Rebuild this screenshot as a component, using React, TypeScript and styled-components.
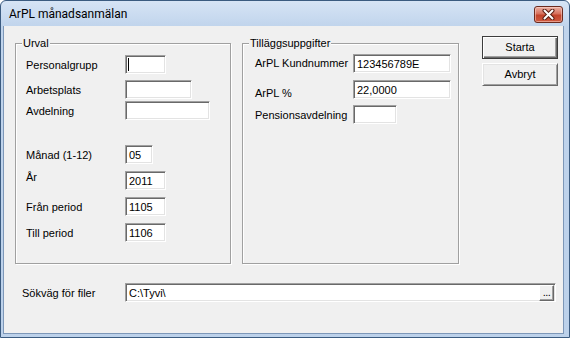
import React from "react";
import styled, { createGlobalStyle } from "styled-components";

const GlobalStyle = createGlobalStyle`
  html, body { margin: 0; padding: 0; background: #ffffff; }
  body { font-family: "Liberation Sans", Arial, sans-serif; font-size: 11px; color: #000; }
  * { box-sizing: border-box; }
`;

const Window = styled.div`
  width: 570px;
  height: 338px;
  border: 1px solid #3b5b80;
  border-radius: 6px 6px 0 0;
  background: linear-gradient(to bottom, #d6e4f5 0px, #c0d4ec 26px, #bcd1ea 100%);
  display: flex;
  flex-direction: column;
  padding: 0 5px 3px 2px;
  overflow: hidden;
`;

const TitleBar = styled.div`
  height: 25px;
  display: flex;
  align-items: center;
  justify-content: space-between;
  padding: 0 1px 0 6px;
`;

const TitleText = styled.span`
  font-family: Roboto, "Liberation Sans", sans-serif;
  font-size: 12px;
  color: #000;
  margin-top: 1px;
`;

const CloseButton = styled.div`
  width: 29px;
  height: 17px;
  margin-top: 2px;
  border: 1px solid #6b2a1e;
  border-radius: 3px;
  background: linear-gradient(to bottom, #eab0a3 0%, #d7705c 45%, #c2432b 55%, #cf5a40 100%);
  box-shadow: inset 0 0 0 1px rgba(255, 220, 210, 0.5);
  display: flex;
  align-items: center;
  justify-content: center;
`;

const Client = styled.div`
  flex: 1;
  background: #f0f0f0;
  border: 1px solid #7d97b8;
  border-top: none;
  display: flex;
  flex-direction: column;
`;

const TopRow = styled.div`
  display: flex;
  align-items: flex-start;
  padding: 10px 0 0 11px;
`;

const GroupBox = styled.fieldset<{ $w: number; $gap: number }>`
  width: ${(p) => p.$w}px;
  height: 227px;
  margin: 1px ${(p) => p.$gap}px 0 0;
  padding: 0;
  border: 1px solid #a0a0a0;
  box-shadow: 1px 1px 0 #ffffff, inset 1px 1px 0 #ffffff;
  min-width: 0;
`;

const Legend = styled.legend`
  font-size: 11px;
  line-height: 13px;
  margin-left: 6px;
  padding: 0 1px;
  background: #f0f0f0;
`;

const GroupBody = styled.div<{ $pl: number }>`
  display: flex;
  flex-direction: column;
  padding-left: ${(p) => p.$pl}px;
`;

const FieldRow = styled.div<{ $mt: number }>`
  display: flex;
  align-items: center;
  height: 19px;
  margin-top: ${(p) => p.$mt}px;
`;

const Label = styled.span<{ $w: number; $dy?: number }>`
  width: ${(p) => p.$w}px;
  flex: none;
  white-space: nowrap;
  position: relative;
  top: ${(p) => p.$dy ?? 0}px;
`;

const TextBox = styled.div<{ $w: number }>`
  width: ${(p) => p.$w}px;
  height: 19px;
  flex: none;
  background: #ffffff;
  border: 1px solid;
  border-color: #a0a0a0 #ffffff #ffffff #a0a0a0;
  box-shadow: inset 1px 1px 0 #696969, inset -1px -1px 0 #e3e3e3;
  padding: 0 0 0 3px;
  display: flex;
  align-items: center;
  white-space: nowrap;
  overflow: hidden;
`;

const Caret = styled.span`
  width: 1px;
  height: 13px;
  background: #000;
  margin-left: -1px;
`;

const ButtonColumn = styled.div`
  display: flex;
  flex-direction: column;
  gap: 4px;
`;

const PushButton = styled.div<{ $default?: boolean }>`
  width: 76px;
  height: 23px;
  background: #f0f0f0;
  border: 1px solid;
  border-color: ${(p) => (p.$default ? "#3c3c3c" : "#ffffff #696969 #696969 #ffffff")};
  box-shadow: ${(p) =>
    p.$default
      ? "inset 1px 1px 0 #ffffff, inset -1px -1px 0 #696969, inset -2px -2px 0 #a0a0a0"
      : "inset 1px 1px 0 #e3e3e3, inset -1px -1px 0 #a0a0a0"};
  display: flex;
  align-items: center;
  justify-content: center;
  padding-bottom: 1px;
`;

const BottomRow = styled.div`
  display: flex;
  align-items: center;
  padding: 19px 0 0 18px;
`;

const PathBox = styled(TextBox)`
  padding-right: 1px;
  justify-content: space-between;
`;

const EllipsisButton = styled.div`
  width: 15px;
  height: 16px;
  margin-top: 1px;
  background: #f0f0f0;
  border: 1px solid;
  border-color: #ffffff #696969 #696969 #ffffff;
  box-shadow: inset -1px -1px 0 #a0a0a0;
  display: flex;
  align-items: flex-end;
  justify-content: center;
  font-size: 11px;
  line-height: 11px;
  padding-bottom: 2px;
  letter-spacing: -0.5px;
`;

type Field = { label: string; width: number; mt: number; value?: string; dy?: number; caret?: boolean };

const urval: Field[] = [
  { label: "Personalgrupp", width: 41, mt: 5, caret: true },
  { label: "Arbetsplats", width: 67, mt: 6 },
  { label: "Avdelning", width: 85, mt: 2 },
  { label: "Månad (1-12)", width: 28, mt: 25, value: "05" },
  { label: "År", width: 41, mt: 7, value: "2011", dy: -4 },
  { label: "Från period", width: 41, mt: 7, value: "1105" },
  { label: "Till period", width: 41, mt: 7, value: "1106" },
];

const extra: Field[] = [
  { label: "ArPL Kundnummer", width: 98, mt: 4, value: "123456789E", dy: -1 },
  { label: "ArPL %", width: 98, mt: 7, value: "22,0000", dy: 3 },
  { label: "Pensionsavdelning", width: 44, mt: 6 },
];

function Fields({ items, labelWidth }: { items: Field[]; labelWidth: number }) {
  return (
    <>
      {items.map((f) => (
        <FieldRow key={f.label} $mt={f.mt}>
          <Label $w={labelWidth} $dy={f.dy}>
            {f.label}
          </Label>
          <TextBox $w={f.width}>
            {f.caret ? <Caret /> : f.value}
          </TextBox>
        </FieldRow>
      ))}
    </>
  );
}

export default function App() {
  return (
    <>
      <GlobalStyle />
      <Window>
        <TitleBar>
          <TitleText>ArPL månadsanmälan</TitleText>
          <CloseButton>
            <svg width="13" height="11" viewBox="0 0 13 11">
              <path d="M2.5 1.5 L10.5 9.5 M10.5 1.5 L2.5 9.5" stroke="#5a1d12" strokeWidth="4" strokeLinecap="round" />
              <path d="M2.5 1.5 L10.5 9.5 M10.5 1.5 L2.5 9.5" stroke="#ffffff" strokeWidth="2" strokeLinecap="round" />
            </svg>
          </CloseButton>
        </TitleBar>
        <Client>
          <TopRow>
            <GroupBox $w={216} $gap={11}>
              <Legend>Urval</Legend>
              <GroupBody $pl={10}>
                <Fields items={urval} labelWidth={99} />
              </GroupBody>
            </GroupBox>
            <GroupBox $w={217} $gap={23}>
              <Legend>Tilläggsuppgifter</Legend>
              <GroupBody $pl={12}>
                <Fields items={extra} labelWidth={98} />
              </GroupBody>
            </GroupBox>
            <ButtonColumn>
              <PushButton $default>Starta</PushButton>
              <PushButton>Avbryt</PushButton>
            </ButtonColumn>
          </TopRow>
          <BottomRow>
            <Label $w={103}>Sökväg för filer</Label>
            <PathBox $w={431}>
              <span>C:\Tyvi\</span>
              <EllipsisButton>...</EllipsisButton>
            </PathBox>
          </BottomRow>
        </Client>
      </Window>
    </>
  );
}
